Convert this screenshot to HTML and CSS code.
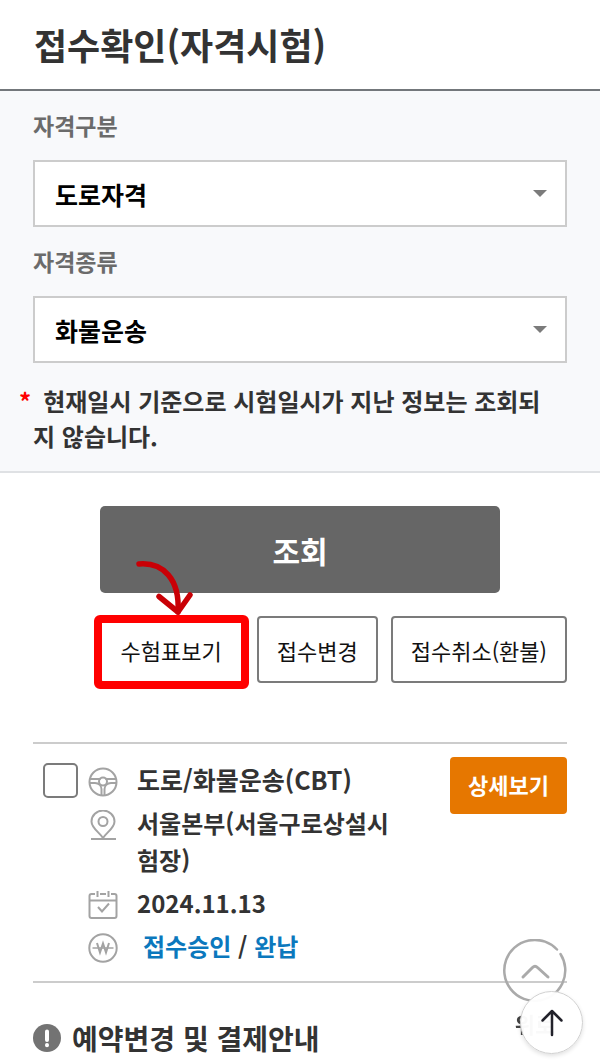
FILE: index.html
```html
<!DOCTYPE html>
<html lang="ko">
<head>
  <meta charset="UTF-8">
  <meta name="viewport" content="width=device-width, initial-scale=1.0">
  <title>접수확인(자격시험)</title>
  <link rel="stylesheet" href="styles.css">
</head>
<body>

  <header class="page-header">
    <h1>접수확인(자격시험)</h1>
  </header>

  <!-- Search filter -->
  <section class="filter">
    <label for="category">자격구분</label>
    <div class="select-box">
      <select id="category">
        <option>도로자격</option>
      </select>
    </div>

    <label for="kind">자격종류</label>
    <div class="select-box">
      <select id="kind">
        <option>화물운송</option>
      </select>
    </div>

    <p class="note"><span class="star">*</span>현재일시 기준으로 시험일시가 지난 정보는 조회되지 않습니다.</p>
  </section>

  <main class="content">
    <button type="button" class="btn-search">조회</button>

    <div class="actions">
      <button type="button" class="btn marked">수험표보기
        <svg class="arrow" width="58" height="58" viewBox="0 0 58 58" fill="none" stroke="#c90006" stroke-width="5.5" stroke-linecap="round" stroke-linejoin="round" aria-hidden="true">
          <path d="M4 5C28 3 45 20 43 53"/>
          <path d="M24 37.500L43 53L55 36"/>
        </svg>
      </button>
      <button type="button" class="btn">접수변경</button>
      <button type="button" class="btn">접수취소(환불)</button>
    </div>

    <!-- Reservation -->
    <article class="reservation">
      <input type="checkbox" class="check" aria-label="도로/화물운송(CBT) 선택">
      <ul class="info">
        <li class="name">
          <svg class="icon" viewBox="0 0 30 30" aria-hidden="true">
            <circle cx="15" cy="15" r="13.500"/>
            <circle cx="15" cy="14.500" r="4"/>
            <path d="M2 12H8C10.500 12 11.500 12.500 12.500 11.500M28 12H22C19.500 12 18.500 12.500 17.500 11.500M2 16H7C11 16 13.500 19 13.500 22V28M28 16H23C19 16 16.500 19 16.500 22V28"/>
          </svg>
          <span>도로/화물운송(CBT)</span>
        </li>
        <li>
          <svg class="icon" viewBox="0 0 30 30" aria-hidden="true">
            <path d="M15 28C11 22 3.500 18 3.500 11.500A11.500 11 0 0 1 26.500 11.500C26.500 18 19 22 15 28Z"/>
            <circle cx="15" cy="11.500" r="4.500"/>
            <path d="M3 29H28"/>
          </svg>
          <span>서울본부(서울구로상설시험장)</span>
        </li>
        <li>
          <svg class="icon" viewBox="0 0 30 30" aria-hidden="true">
            <path d="M7 4H3.500Q1.500 4 1.500 6V26Q1.500 28 3.500 28H26.500Q28.500 28 28.500 26V6Q28.500 4 26.500 4H23M12 4H18M1.500 10.500H28.500M9.500 1V7M20.500 1V7M10 17L14 21.500L21 13.500"/>
          </svg>
          <span>2024.11.13</span>
        </li>
        <li>
          <svg class="icon" viewBox="0 0 30 30" aria-hidden="true">
            <circle cx="15" cy="15" r="13.700"/>
            <path d="M4.500 15H25.500" stroke-width="1.500"/>
            <path d="M9 10L12 19.500L15 10.500L18 19.500L21 10"/>
          </svg>
          <span class="status"><a href="#">접수승인</a> / <a href="#">완납</a></span>
        </li>
      </ul>
      <button type="button" class="btn-detail">상세보기</button>
    </article>

    <h2 class="guide-title">
      <svg width="28" height="28" viewBox="0 0 28 28" aria-hidden="true">
        <circle cx="14" cy="14" r="14" fill="#737373"/>
        <path d="M14 7.500V16M14 21V21.200" stroke="#fff" stroke-width="4" stroke-linecap="round"/>
      </svg>
      예약변경 및 결제안내
    </h2>
  </main>

  <!-- Floating buttons -->
  <a href="#" class="go-up">
    <svg width="64" height="64" viewBox="0 0 64 64" fill="none" stroke="#aaa" stroke-width="2.500" stroke-linecap="round" stroke-linejoin="round" aria-hidden="true">
      <path d="M54 10.500A30.500 30.500 0 1 0 57.500 15"/>
      <path d="M20 38L29.500 28.500Q32 26 34.500 28.500L45 38" stroke-width="3"/>
    </svg>
    <span>위로</span>
  </a>
  <button type="button" class="btn-top" aria-label="맨 위로">
    <svg width="24" height="28" viewBox="0 0 24 28" fill="none" stroke="#22222b" stroke-width="2.500" stroke-linecap="round" stroke-linejoin="round" aria-hidden="true">
      <path d="M12 26V2M2.500 11.500L12 2L21.500 11.500"/>
    </svg>
  </button>

</body>
</html>
```
FILE: styles.css
```css
* {
  box-sizing: border-box;
}
body {
  margin: 0;
  background: #fff;
  color: #333;
  font-family: "Noto Sans CJK KR", "Noto Sans", sans-serif;
  font-size: 24px;
  font-weight: 700;
}
button, select {
  font-family: inherit;
  cursor: pointer;
}
.page-header {
  padding: 18px 34px;
  border-bottom: 2px solid #73777b;
}
.page-header h1 {
  margin: 0;
  font-size: 36px;
  line-height: 53px;
}

/* filter */
.filter {
  padding: 17px 33px 18px;
  background: #f8f9fb;
  border-bottom: 2px solid #dfe1e4;
}
.filter label {
  display: block;
  margin-bottom: 18px;
  color: #6b6b6b;
  font-size: 23px;
  line-height: 34px;
}
.select-box {
  position: relative;
  margin-bottom: 17px;
}
.select-box::after {
  content: "";
  position: absolute;
  top: 30px;
  right: 20px;
  border: 7px solid transparent;
  border-top-color: #7b7b7b;
  border-bottom: 0;
  pointer-events: none;
}
.select-box select {
  display: block;
  width: 100%;
  height: 67px;
  padding: 0 40px 0 20px;
  appearance: none;
  background: #fff;
  border: 2px solid #ccc;
  border-radius: 0;
  color: #000;
  font-size: 25px;
  font-weight: 700;
}
.note {
  margin: 20px 0 0;
  padding-right: 14px;
  line-height: 35px;
  text-indent: -14px;
  word-break: break-all;
}
.star {
  margin-right: 12px;
  color: #f00;
}

/* buttons */
.content {
  padding: 33px 33px 4px;
}
.btn-search {
  display: block;
  width: 75%;
  height: 87px;
  margin: 0 auto 23px;
  background: #666;
  border: none;
  border-radius: 5px;
  color: #fff;
  font-size: 30px;
  font-weight: 700;
}
.actions {
  display: flex;
  justify-content: flex-end;
  gap: 13px;
  margin-bottom: 59px;
}
.btn {
  height: 67px;
  padding: 0 18px;
  background: #fff;
  border: 2px solid #7b7b7b;
  border-radius: 4px;
  color: #111;
  font-size: 22px;
  font-weight: 400;
}
.marked {
  position: relative;
  padding: 0 20px;
}
.marked::after {
  content: "";
  position: absolute;
  inset: -3px -7px -8px;
  border: 8px solid #f00;
  border-radius: 6px;
}
.arrow {
  position: absolute;
  top: -59px;
  left: 34px;
  z-index: 1;
}

/* reservation */
.reservation {
  display: flex;
  align-items: flex-start;
  padding: 13px 0 17px;
  border-top: 2px solid #ccc;
  border-bottom: 2px solid #ccc;
}
.check {
  flex: none;
  width: 35px;
  height: 35px;
  margin: 6px 10px 0;
  appearance: none;
  background: #fff;
  border: 2px solid #7b7b7b;
  border-radius: 5px;
}
.info {
  display: flex;
  flex: 1;
  flex-direction: column;
  gap: 6px;
  margin: 0;
  padding: 4px 0 0;
  list-style: none;
  line-height: 37px;
}
.info li {
  display: flex;
  gap: 19px;
  word-break: break-all;
}
.info .name {
  font-size: 25px;
}
.icon {
  flex: none;
  width: 30px;
  height: 30px;
  margin-top: 6px;
  fill: none;
  stroke: #a3a3a3;
  stroke-width: 2;
}
.status {
  padding-left: 6px;
}
.status a {
  color: #0b78bd;
  text-decoration: none;
}
.btn-detail {
  flex: none;
  width: 117px;
  height: 57px;
  margin-left: 56px;
  padding: 0 0 4px;
  background: #e67700;
  border: none;
  border-radius: 4px;
  color: #fff;
  font-size: 22px;
  font-weight: 700;
}
.guide-title {
  display: flex;
  align-items: center;
  gap: 11px;
  margin: 35px 0 0;
  font-size: 28px;
  line-height: 40px;
}

/* floating */
.go-up {
  position: fixed;
  right: 33px;
  bottom: 19px;
  display: flex;
  flex-direction: column;
  align-items: center;
  color: #444;
  font-size: 22px;
  line-height: 40px;
  text-decoration: none;
}
.go-up svg {
  display: block;
}
.btn-top {
  position: fixed;
  right: 17px;
  bottom: 8px;
  display: flex;
  align-items: center;
  justify-content: center;
  width: 63px;
  height: 63px;
  padding: 0;
  background: rgba(255, 255, 255, 0.97);
  border: 1px solid #d0d0d0;
  border-radius: 50%;
  box-shadow: 0 2px 4px rgba(0, 0, 0, 0.12);
}
```
